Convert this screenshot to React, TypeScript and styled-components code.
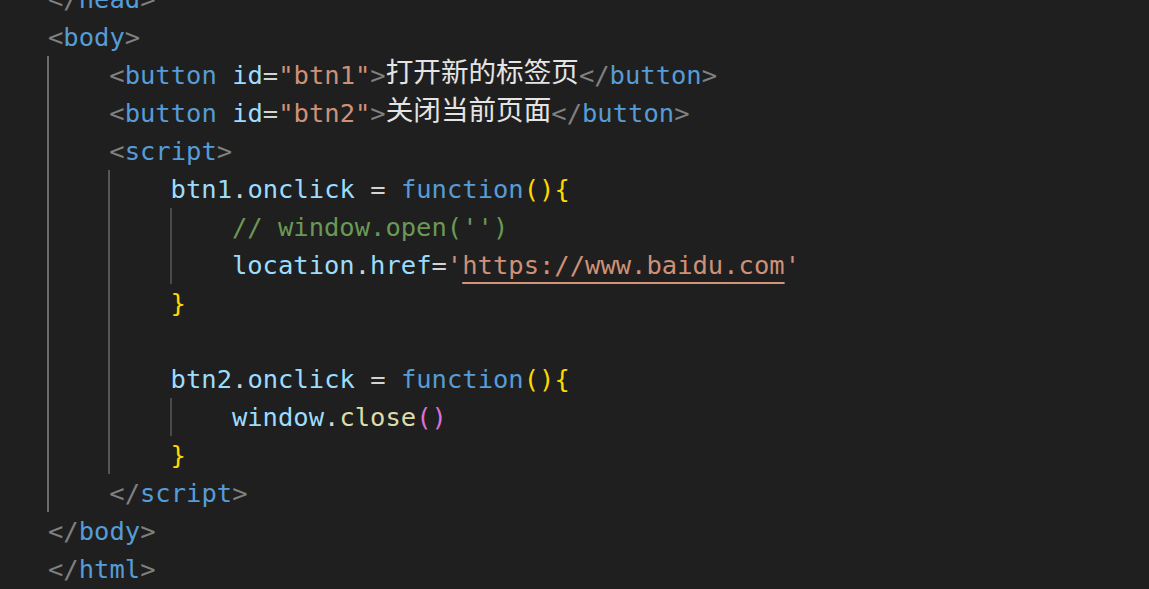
import React from "react";
import styled, { createGlobalStyle } from "styled-components";

const Global = createGlobalStyle`
  html, body { margin: 0; padding: 0; background: #1f1f1f; overflow: hidden; }
  body { width: 1149px; height: 589px; }
`;

const Editor = styled.div`
  margin-top: -20px;
  padding-left: 48px;
  font-family: "DejaVu Sans Mono", "Liberation Mono", monospace;
  font-size: 25.5px;
  line-height: 38px;
  color: #d4d4d4;
  background: #1f1f1f;
  display: flex;
  flex-direction: column;
`;

const Line = styled.div`
  display: flex;
  height: 38px;
  white-space: pre;
`;

const Indent = styled.span<{ $guide?: string }>`
  display: block;
  width: 61.3px;
  flex: none;
  box-sizing: border-box;
  border-left: 2px solid ${(p) => p.$guide ?? "transparent"};
  margin-left: -1px;
  margin-right: 1px;
`;

const Code = styled.span`
  display: block;
`;

const colors: Record<string, string> = {
  p: "#808080",
  tag: "#569cd6",
  attr: "#9cdcfe",
  str: "#ce9178",
  txt: "#d4d4d4",
  var: "#9cdcfe",
  kw: "#569cd6",
  fn: "#dcdcaa",
  br1: "#ffd700",
  br2: "#da70d6",
  cm: "#6a9955",
};

const Tok = styled.span<{ $c: string }>`
  color: ${(p) => colors[p.$c]};
`;

const Cjk = styled.span`
  font-family: "Noto Sans CJK SC", sans-serif;
  font-size: 27.6px;
  line-height: 1;
  position: relative;
  top: -2px;
  color: #e4e4e4;
`;

const Link = styled.span`
  color: #ce9178;
  text-decoration: underline;
  text-decoration-thickness: 2px;
  text-underline-offset: 8px;
  text-decoration-color: #d39478;
`;

const G1 = "#6c6c6c";
const G2 = "#565656";
const G3 = "#4a4a4a";

type T = [string, string];

const tagOpen = (name: string): T[] => [["p", "<"], ["tag", name], ["p", ">"]];
const tagClose = (name: string): T[] => [["p", "</"], ["tag", name], ["p", ">"]];

const L = ({ guides, children }: { guides: (string | undefined)[]; children?: React.ReactNode }) => (
  <Line>
    {guides.map((g, i) => (
      <Indent key={i} $guide={g} />
    ))}
    <Code>{children}</Code>
  </Line>
);

const toks = (list: T[]) => list.map(([c, t], i) => <Tok key={i} $c={c}>{t}</Tok>);

export default function App() {
  return (
    <>
      <Global />
      <Editor>
        <L guides={[]}>{toks(tagClose("head"))}</L>
        <L guides={[]}>{toks(tagOpen("body"))}</L>
        <L guides={[G1]}>
          {toks([["p", "<"], ["tag", "button"], ["txt", " "], ["attr", "id"], ["txt", "="], ["str", '"btn1"'], ["p", ">"]])}
          <Cjk>打开新的标签页</Cjk>
          {toks(tagClose("button"))}
        </L>
        <L guides={[G1]}>
          {toks([["p", "<"], ["tag", "button"], ["txt", " "], ["attr", "id"], ["txt", "="], ["str", '"btn2"'], ["p", ">"]])}
          <Cjk>关闭当前页面</Cjk>
          {toks(tagClose("button"))}
        </L>
        <L guides={[G1]}>{toks(tagOpen("script"))}</L>
        <L guides={[G1, G2]}>
          {toks([["var", "btn1"], ["txt", "."], ["var", "onclick"], ["txt", " = "], ["kw", "function"], ["br1", "(){"]])}
        </L>
        <L guides={[G1, G2, G3]}>{toks([["cm", "// window.open('')"]])}</L>
        <L guides={[G1, G2, G3]}>
          {toks([["var", "location"], ["txt", "."], ["var", "href"], ["txt", "="], ["str", "'"]])}
          <Link>https://www.baidu.com</Link>
          {toks([["str", "'"]])}
        </L>
        <L guides={[G1, G2]}>{toks([["br1", "}"]])}</L>
        <L guides={[G1, G2]} />
        <L guides={[G1, G2]}>
          {toks([["var", "btn2"], ["txt", "."], ["var", "onclick"], ["txt", " = "], ["kw", "function"], ["br1", "(){"]])}
        </L>
        <L guides={[G1, G2, G3]}>
          {toks([["var", "window"], ["txt", "."], ["fn", "close"], ["br2", "()"]])}
        </L>
        <L guides={[G1, G2]}>{toks([["br1", "}"]])}</L>
        <L guides={[G1]}>{toks(tagClose("script"))}</L>
        <L guides={[]}>{toks(tagClose("body"))}</L>
        <L guides={[]}>{toks(tagClose("html"))}</L>
      </Editor>
    </>
  );
}
